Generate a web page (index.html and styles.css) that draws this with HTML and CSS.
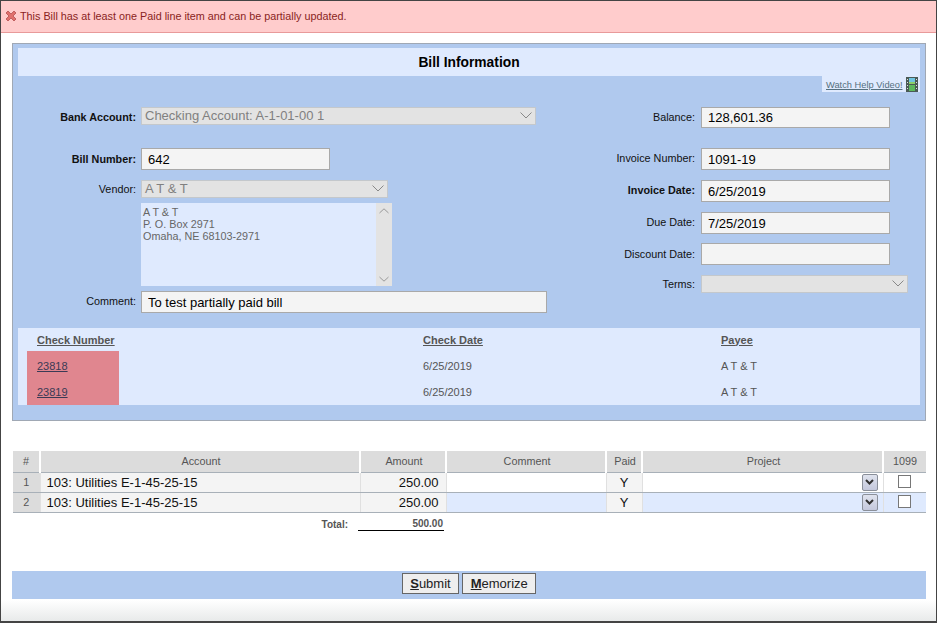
FILE: index.html
```html
<!DOCTYPE html>
<html lang="en">
<head>
  <meta charset="UTF-8">
  <title>Bill Information</title>
  <link rel="stylesheet" href="styles.css">
</head>
<body>
  <div class="alert">
    <svg class="alert-icon" width="12" height="12" viewBox="0 0 12 12">
      <path d="M1 3 L3 1 L6 4 L9 1 L11 3 L8 6 L11 9 L9 11 L6 8 L3 11 L1 9 L4 6 Z" fill="#e0706c" stroke="#b55050" stroke-width="0.8"/>
    </svg>
    This Bill has at least one Paid line item and can be partially updated.
  </div>

  <div class="panel">
    <div class="panel-title">Bill Information</div>
    <div class="help-row">
      <a class="help-link"><span>Watch Help Video!</span>
        <svg width="12" height="15" viewBox="0 0 12 15">
          <rect width="12" height="15" fill="#4a5a55"/>
          <rect x="3" y="1" width="6" height="6" fill="#6fc4e0"/>
          <rect x="3" y="8" width="6" height="6" fill="#5cb85c"/>
          <rect x="3" y="5" width="6" height="2" fill="#8ccf6a"/>
          <rect x="1" y="2" width="1" height="1" fill="#ddd"/>
          <rect x="1" y="5" width="1" height="1" fill="#ddd"/>
          <rect x="1" y="8" width="1" height="1" fill="#ddd"/>
          <rect x="1" y="11" width="1" height="1" fill="#ddd"/>
          <rect x="10" y="2" width="1" height="1" fill="#ddd"/>
          <rect x="10" y="5" width="1" height="1" fill="#ddd"/>
          <rect x="10" y="8" width="1" height="1" fill="#ddd"/>
          <rect x="10" y="11" width="1" height="1" fill="#ddd"/>
        </svg>
      </a>
    </div>

    <div class="form">
      <div class="col-left">
        <div class="row row-bank">
          <label class="req">Bank Account:</label>
          <div class="select w-bank">Checking Account: A-1-01-00 1
            <svg class="chev" width="12" height="7" viewBox="0 0 12 7"><path d="M0.5 0.5 L6 6 L11.5 0.5" fill="none" stroke="#888"/></svg>
          </div>
        </div>
        <div class="row row-number">
          <label class="req">Bill Number:</label>
          <input class="w-number" type="text" value="642">
        </div>
        <div class="row row-vendor">
          <label>Vendor:</label>
          <div class="select w-vendor">A T &amp; T
            <svg class="chev" width="12" height="7" viewBox="0 0 12 7"><path d="M0.5 0.5 L6 6 L11.5 0.5" fill="none" stroke="#888"/></svg>
          </div>
        </div>
        <div class="row row-address">
          <label></label>
          <div class="address">
            <div class="address-text">A T &amp; T<br>P. O. Box 2971<br>Omaha, NE 68103-2971</div>
            <div class="scroll">
              <svg width="10" height="6" viewBox="0 0 10 6"><path d="M0.5 5 L5 0.8 L9.5 5" fill="none" stroke="#999"/></svg>
              <svg width="10" height="6" viewBox="0 0 10 6"><path d="M0.5 1 L5 5.2 L9.5 1" fill="none" stroke="#999"/></svg>
            </div>
          </div>
        </div>
        <div class="row row-comment">
          <label>Comment:</label>
          <input class="w-comment" type="text" value="To test partially paid bill">
        </div>
      </div>

      <div class="col-right">
        <div class="row row-balance">
          <label>Balance:</label>
          <input class="w-date" type="text" value="128,601.36">
        </div>
        <div class="row row-invoice">
          <label>Invoice Number:</label>
          <input class="w-date" type="text" value="1091-19">
        </div>
        <div class="row row-date">
          <label class="req">Invoice Date:</label>
          <input class="w-date" type="text" value="6/25/2019">
        </div>
        <div class="row row-date">
          <label>Due Date:</label>
          <input class="w-date" type="text" value="7/25/2019">
        </div>
        <div class="row row-discount">
          <label>Discount Date:</label>
          <input class="w-date" type="text" value="">
        </div>
        <div class="row row-terms">
          <label>Terms:</label>
          <div class="select w-terms">
            <svg class="chev" width="12" height="7" viewBox="0 0 12 7"><path d="M0.5 0.5 L6 6 L11.5 0.5" fill="none" stroke="#888"/></svg>
          </div>
        </div>
      </div>
    </div>

    <table class="checks">
      <tr>
        <th class="c-num"><u>Check Number</u></th>
        <th class="c-date"><u>Check Date</u></th>
        <th><u>Payee</u></th>
      </tr>
      <tr class="first">
        <td class="c-num paid"><u>23818</u></td>
        <td class="c-date">6/25/2019</td>
        <td>A T &amp; T</td>
      </tr>
      <tr>
        <td class="c-num paid"><u>23819</u></td>
        <td class="c-date">6/25/2019</td>
        <td>A T &amp; T</td>
      </tr>
    </table>
  </div>

  <table class="lines">
    <colgroup>
      <col class="col-idx"><col class="col-acct"><col class="col-amt"><col class="col-comment">
      <col class="col-paid"><col class="col-proj"><col class="col-1099">
    </colgroup>
    <thead>
      <tr><th>#</th><th>Account</th><th>Amount</th><th>Comment</th><th>Paid</th><th>Project</th><th>1099</th></tr>
    </thead>
    <tbody>
      <tr>
        <td class="idx">1</td><td class="ro acct">103: Utilities E-1-45-25-15</td><td class="ro amt">250.00</td><td></td>
        <td class="ro mid">Y</td>
        <td class="proj"><span class="drop"><svg width="9" height="6" viewBox="0 0 9 6"><path d="M1 1 L4.5 4.5 L8 1" fill="none" stroke="#333" stroke-width="2"/></svg></span></td>
        <td class="mid"><span class="check"></span></td>
      </tr>
      <tr class="alt">
        <td class="idx">2</td><td class="ro acct">103: Utilities E-1-45-25-15</td><td class="ro amt">250.00</td><td></td>
        <td class="ro mid">Y</td>
        <td class="proj"><span class="drop"><svg width="9" height="6" viewBox="0 0 9 6"><path d="M1 1 L4.5 4.5 L8 1" fill="none" stroke="#333" stroke-width="2"/></svg></span></td>
        <td class="mid"><span class="check"></span></td>
      </tr>
    </tbody>
  </table>

  <div class="total">
    <span class="total-label">Total:</span>
    <span class="total-value">500.00</span>
  </div>

  <div class="actions">
    <button class="btn"><u>S</u>ubmit</button>
    <button class="btn"><u>M</u>emorize</button>
  </div>
  <div class="page-foot"></div>
</body>
</html>
```

FILE: styles.css
```css
* {
  margin: 0;
  padding: 0;
  box-sizing: border-box;
}

html, body {
  height: 623px;
  overflow: hidden;
}

body {
  font-family: "Liberation Sans", Arial, sans-serif;
  background: #fff;
  border: 1px solid #444;
  border-bottom-width: 2px;
}

.alert {
  display: flex;
  align-items: center;
  gap: 3px;
  height: 32px;
  padding-left: 4px;
  padding-bottom: 1px;
  background: #ffcccc;
  border-bottom: 1px solid #e89a9a;
  color: #8a1f22;
  font-size: 10.8px;
}

.panel {
  margin: 10px 10px 0 11px;
  height: 378px;
  padding: 4px 5px 0;
  background: #b0c9ee;
  border: 1px solid #a0a8b4;
}

.panel-title {
  height: 28px;
  padding-top: 1px;
  line-height: 27px;
  background: #dfeafe;
  text-align: center;
  font-size: 13.8px;
  font-weight: bold;
  color: #000;
}

.help-row {
  display: flex;
  justify-content: flex-end;
  height: 16px;
}

.help-link {
  display: flex;
  align-items: center;
  justify-content: space-between;
  width: 98px;
  height: 16px;
  padding: 0 2px 0 4px;
  background: #dfeafe;
  color: #55707f;
  font-size: 9.3px;
  white-space: nowrap;
}

.help-link span {
  padding-top: 2px;
  text-decoration: underline;
}

.help-link svg {
  flex: none;
  margin-top: 1px;
}

.form {
  display: flex;
  height: 236px;
  padding-top: 15px;
}

.col-left {
  width: 534px;
}

.col-right {
  width: 368px;
}

.row {
  display: flex;
  align-items: center;
}

.row label {
  flex: none;
  text-align: right;
  font-size: 10.8px;
  color: #111;
  padding-right: 5px;
}

.col-left label {
  width: 123px;
}

.col-right label {
  width: 149px;
  padding-right: 6px;
  margin-bottom: 2px;
}

.row label.req {
  font-weight: bold;
}

input {
  height: 22px;
  padding-left: 6px;
  background: #f4f4f4;
  border: 1px solid #a9a9a9;
  font-family: inherit;
  font-size: 13px;
  color: #000;
  outline: none;
}

.select {
  position: relative;
  height: 18px;
  padding-left: 3px;
  line-height: 16px;
  background: #e3e3e3;
  border: 1px solid #c4c8cc;
  font-size: 13px;
  color: #808080;
}

.chev {
  position: absolute;
  right: 3px;
  top: 4px;
}

.w-bank { width: 395px; }
.w-number { width: 189px; }
.w-vendor { width: 247px; }
.w-comment { width: 406px; }
.w-date { width: 189px; }
.w-terms { width: 207px; }

.row-bank label { padding-top: 2px; }
.row-number { margin-top: 23px; }
.row-vendor { margin-top: 10px; }
.row-address { margin-top: 5px; }
.row-comment { margin-top: 5px; align-items: flex-start; }
.row-comment label { padding-top: 4px; }
.row-invoice { margin-top: 20px; }
.row-date { margin-top: 10px; }
.row-discount { margin-top: 9px; }
.row-terms { margin-top: 10px; }
.row-discount label, .row-terms label { margin-bottom: 0; }
.row-balance input { height: 21px; }

.address {
  display: flex;
  width: 251px;
  height: 83px;
  background: #dfeafe;
}

.address-text {
  flex: 1;
  padding: 3px 2px;
  font-size: 10.8px;
  line-height: 12px;
  color: #666;
}

.scroll {
  display: flex;
  flex-direction: column;
  justify-content: space-between;
  align-items: center;
  width: 16px;
  padding: 5px 0 4px;
  background: #e3e3e3;
}

.checks {
  width: 902px;
  height: 77px;
  background: #dfeafe;
  border-collapse: collapse;
  table-layout: fixed;
  font-size: 11px;
  color: #555;
}

.checks th, .checks td {
  text-align: left;
}

.checks th {
  height: 23px;
  font-weight: bold;
}

.checks td {
  height: 27px;
}

.checks .first td {
  padding-top: 2px;
}

.checks .c-num {
  width: 405px;
  padding-left: 19px;
}

.checks .c-date {
  width: 298px;
}

.checks td.paid {
  background: linear-gradient(to right, #dfeafe 9px, #e0868f 9px, #e0868f 101px, #dfeafe 101px);
  color: #3a3a55;
}

.lines {
  margin: 30px 0 0 12px;
  width: 913px;
  border-collapse: collapse;
  table-layout: fixed;
  font-size: 13px;
  color: #111;
}

.col-idx { width: 27px; }
.col-acct { width: 320px; }
.col-amt { width: 86px; }
.col-comment { width: 160px; }
.col-paid { width: 36px; }
.col-proj { width: 241px; }
.col-1099 { width: 43px; }

.lines th {
  height: 21px;
  padding: 0 0 1px 2px;
  background: #dcdcdc;
  border-bottom: 1px solid #a8b0b8;
  border-left: 2px solid #fff;
  font-size: 10.8px;
  font-weight: normal;
  color: #555;
}

.lines th:first-child {
  padding-left: 0;
  border-left: 0;
}

.lines th:last-child {
  padding-left: 0;
}

.lines td {
  height: 20px;
  padding: 0;
  border-bottom: 1px solid #a8b0b8;
  border-left: 1px solid #e0e0e0;
}

.lines td:first-child {
  border-left: 0;
}

.lines .alt td {
  background: #dfeafe;
}

.lines td.ro, .lines .alt td.ro {
  background: #f4f4f4;
}

.lines .alt td.ro {
  padding-top: 1px;
}

.lines td.idx, .lines .alt td.idx {
  background: #dcdcdc;
  text-align: center;
  font-size: 10.8px;
  color: #555;
}

.lines td.acct {
  padding-left: 6px;
}

.lines td.amt {
  text-align: right;
  padding-right: 7px;
}

.mid {
  text-align: center;
}

.lines td.proj {
  text-align: right;
  padding-right: 5px;
}

.drop {
  display: inline-flex;
  align-items: center;
  justify-content: center;
  width: 16px;
  height: 17px;
  vertical-align: middle;
  background: linear-gradient(#dfe3ee, #c4c8dc);
  border: 1px solid #8a8f99;
  border-radius: 2px;
}

.check {
  display: inline-block;
  width: 13px;
  height: 13px;
  margin-bottom: 2px;
  vertical-align: middle;
  background: #fff;
  border: 1px solid #777;
}

.total {
  display: flex;
  align-items: flex-start;
  margin: 5px 0 0 12px;
  height: 17px;
  font-weight: bold;
  color: #555;
  font-size: 10px;
}

.total-label {
  width: 335px;
  padding-top: 1px;
  text-align: right;
}

.total-value {
  width: 86px;
  height: 13px;
  margin-left: 10px;
  padding-right: 1px;
  text-align: right;
  border-bottom: 1px solid #000;
}

.actions {
  display: flex;
  justify-content: center;
  gap: 3px;
  margin: 36px 0 0 11px;
  width: 914px;
  height: 28px;
  padding-top: 2px;
  background: #b0c9ee;
}

.btn {
  height: 21px;
  padding: 0 7.5px;
  background: #eee;
  border: 1px solid #666;
  font-family: inherit;
  font-size: 13px;
  color: #222;
}

.btn u {
  font-weight: bold;
}

.page-foot {
  height: 21px;
  margin-top: 1px;
  background: linear-gradient(#fff, #e8eaea);
}
```
